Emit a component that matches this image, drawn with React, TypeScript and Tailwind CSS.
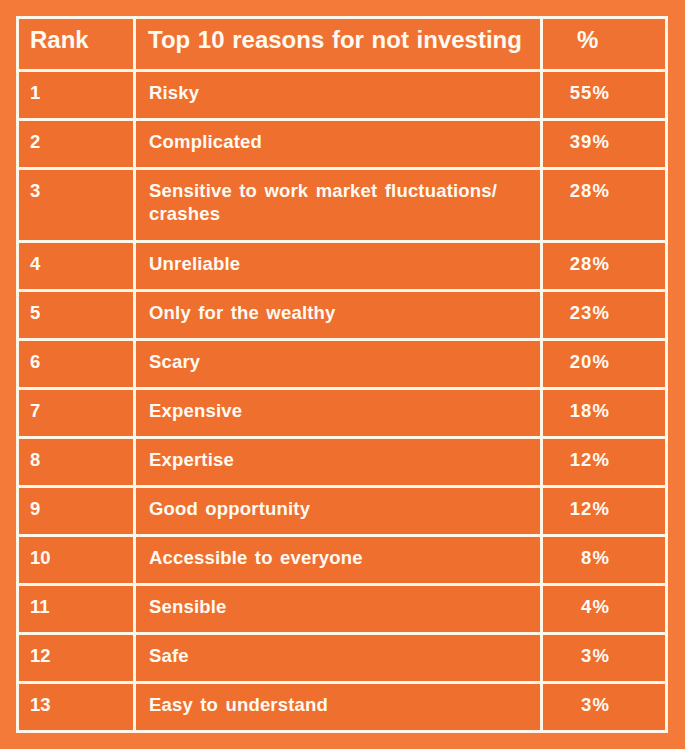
const rows: [string, string, string][] = [
  ['1', 'Risky', '55%'],
  ['2', 'Complicated', '39%'],
  ['3', 'Sensitive to work market fluctuations/ crashes', '28%'],
  ['4', 'Unreliable', '28%'],
  ['5', 'Only for the wealthy', '23%'],
  ['6', 'Scary', '20%'],
  ['7', 'Expensive', '18%'],
  ['8', 'Expertise', '12%'],
  ['9', 'Good opportunity', '12%'],
  ['10', 'Accessible to everyone', '8%'],
  ['11', 'Sensible', '4%'],
  ['12', 'Safe', '3%'],
  ['13', 'Easy to understand', '3%'],
];

export default function App() {
  return (
    <div className="w-[685px] h-[749px] bg-[#f37a38] pt-4 pl-4 font-['Liberation_Sans',Arial,sans-serif] text-[#fffaf2]">
      <div className="w-[652px] grid grid-cols-[114px_404px_122px] gap-[3px] p-[3px] bg-[#fff6ea]">
        {/* header */}
        <div className="h-[50px] bg-[#f07232] pl-[11px] pt-[8px] text-[24px] font-bold leading-[26px]">
          Rank
        </div>
        <div className="h-[50px] bg-[#f07232] pl-[12px] pt-[8px] text-[24px] font-bold leading-[26px] whitespace-nowrap [word-spacing:1px]">
          Top 10 reasons for not investing
        </div>
        <div className="h-[50px] bg-[#f07232] pl-[34px] pt-[8px] text-[24px] font-bold leading-[26px]">
          %
        </div>

        {rows.map(([rank, reason, pct]) => (
          <Row key={rank} rank={rank} reason={reason} pct={pct} />
        ))}
      </div>
    </div>
  );
}

function Row({ rank, reason, pct }: { rank: string; reason: string; pct: string }) {
  const tall = rank === '3';
  const cell = `${tall ? 'h-[70px]' : 'h-[46px]'} bg-[#ef6f2f] pt-[9px] text-[18.5px] font-bold leading-[23px]`;
  return (
    <>
      <div className={`${cell} pl-[11px]`}>{rank}</div>
      <div className={`${cell} pl-[13px] pr-[30px] tracking-[0.01em] [word-spacing:2px]`}>{reason}</div>
      <div className={`${cell} pr-[55px] text-right tracking-[0.06em]`}>{pct}</div>
    </>
  );
}
